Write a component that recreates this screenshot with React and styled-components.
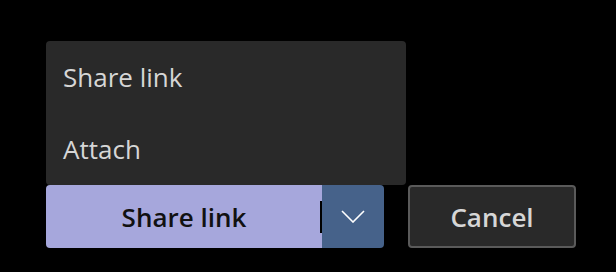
import React from 'react'
import styled, { createGlobalStyle } from 'styled-components'

const GlobalStyle = createGlobalStyle`
  html, body {
    margin: 0;
    padding: 0;
    background: #000;
  }
  body {
    font-family: "Open Sans", "Noto Sans", sans-serif;
    width: 616px;
    height: 272px;
    overflow: hidden;
  }
`

const Page = styled.div`
  display: flex;
  align-items: flex-start;
  gap: 24px;
  padding: 185px 0 0 46px;
`

const SplitWrap = styled.div`
  position: relative;
  display: flex;
  width: 338px;
  height: 63px;
  border-radius: 4px;
  overflow: visible;
`

const Menu = styled.div`
  position: absolute;
  left: 0;
  bottom: 100%;
  width: 360px;
  background: #292929;
  border-radius: 4px;
  display: flex;
  flex-direction: column;
`

const MenuItem = styled.div`
  height: 72px;
  display: flex;
  align-items: center;
  padding-left: 17px;
  color: #d6d6d6;
  font-size: 26px;
`

const MainButton = styled.button`
  flex: 1;
  border: none;
  background: #a6a7dc;
  color: #111;
  font-family: inherit;
  font-size: 26px;
  font-weight: 600;
  border-radius: 4px 0 0 4px;
  display: flex;
  align-items: center;
  justify-content: center;
  padding: 0 0 0 0;
  position: relative;
`

const Caret = styled.span`
  position: absolute;
  right: 0;
  top: 16px;
  width: 2px;
  height: 32px;
  background: #000;
`

const ChevronButton = styled.button`
  width: 62px;
  border: none;
  background: #46628a;
  border-radius: 0 4px 4px 0;
  display: flex;
  align-items: center;
  justify-content: center;
  padding: 0;
`

const CancelButton = styled.button`
  width: 168px;
  height: 63px;
  box-sizing: border-box;
  border: 2px solid #5a5a5a;
  background: #292929;
  color: #d6d6d6;
  border-radius: 4px;
  font-family: inherit;
  font-size: 26px;
  font-weight: 600;
  padding: 0;
`

export default function App() {
  return (
    <>
      <GlobalStyle />
      <Page>
        <SplitWrap>
          <Menu>
            <MenuItem>Share link</MenuItem>
            <MenuItem>Attach</MenuItem>
          </Menu>
          <MainButton>
            Share link
            <Caret />
          </MainButton>
          <ChevronButton>
            <svg width="24" height="13" viewBox="0 0 24 13">
              <path d="M1 1 L12 12 L23 1" fill="none" stroke="#fff" strokeWidth="1.6" />
            </svg>
          </ChevronButton>
        </SplitWrap>
        <CancelButton>Cancel</CancelButton>
      </Page>
    </>
  )
}
